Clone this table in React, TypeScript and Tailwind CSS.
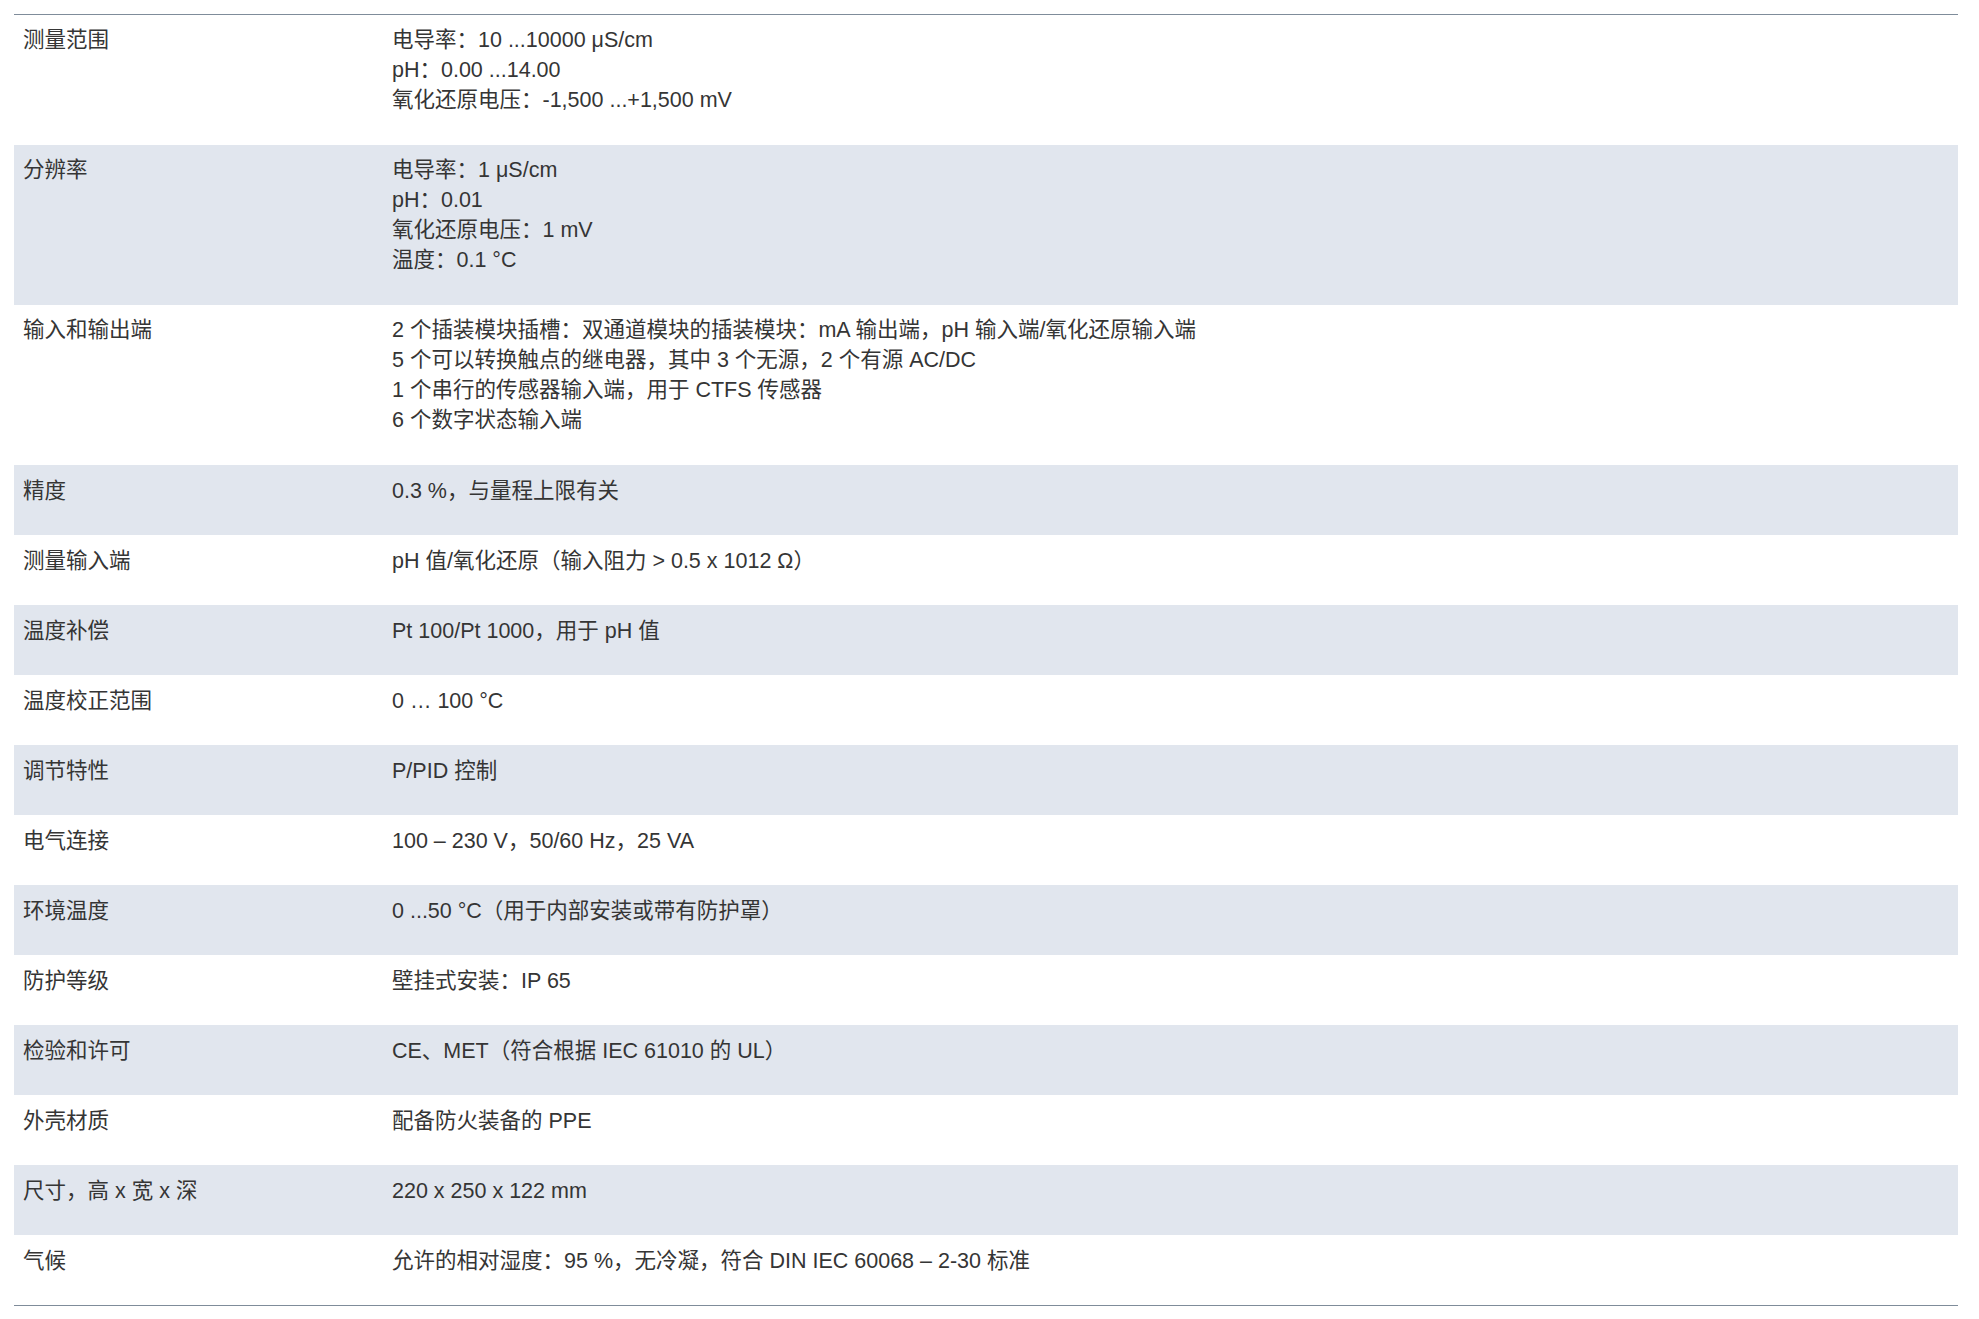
import React from "react";

const rows: { label: string; values: string[] }[] = [
  {
    label: "测量范围",
    values: ["电导率：10 ...10000 μS/cm", "pH：0.00 ...14.00", "氧化还原电压：-1,500 ...+1,500 mV"],
  },
  {
    label: "分辨率",
    values: ["电导率：1 μS/cm", "pH：0.01", "氧化还原电压：1 mV", "温度：0.1 °C"],
  },
  {
    label: "输入和输出端",
    values: [
      "2 个插装模块插槽：双通道模块的插装模块：mA 输出端，pH 输入端/氧化还原输入端",
      "5 个可以转换触点的继电器，其中 3 个无源，2 个有源 AC/DC",
      "1 个串行的传感器输入端，用于 CTFS 传感器",
      "6 个数字状态输入端",
    ],
  },
  { label: "精度", values: ["0.3 %，与量程上限有关"] },
  { label: "测量输入端", values: ["pH 值/氧化还原（输入阻力 > 0.5 x 1012 Ω）"] },
  { label: "温度补偿", values: ["Pt 100/Pt 1000，用于 pH 值"] },
  { label: "温度校正范围", values: ["0 … 100 °C"] },
  { label: "调节特性", values: ["P/PID 控制"] },
  { label: "电气连接", values: ["100 – 230 V，50/60 Hz，25 VA"] },
  { label: "环境温度", values: ["0 ...50 °C（用于内部安装或带有防护罩）"] },
  { label: "防护等级", values: ["壁挂式安装：IP 65"] },
  { label: "检验和许可", values: ["CE、MET（符合根据 IEC 61010 的 UL）"] },
  { label: "外壳材质", values: ["配备防火装备的 PPE"] },
  { label: "尺寸，高 x 宽 x 深", values: ["220 x 250 x 122 mm"] },
  { label: "气候", values: ["允许的相对湿度：95 %，无冷凝，符合 DIN IEC 60068 – 2-30 标准"] },
];

export default function App() {
  return (
    <div
      className="min-h-screen w-full bg-white pl-[14px] pr-[21px] pt-[14px] text-[#353535]"
      style={{ fontFamily: '"Liberation Sans", "Noto Sans CJK SC", sans-serif' }}
    >
      <div className="border-t border-b border-[#7f8c9a]">
        {rows.map((r, i) => {
          const multi = r.values.length > 1;
          return (
            <div
              key={i}
              className={`flex text-[21.5px] leading-[30px] ${i % 2 === 1 ? "bg-[#e1e6ee]" : "bg-white"} ${
                multi ? "pt-[10px] pb-[30px]" : "pt-[11px] pb-[29px]"
              }`}
            >
              <div className="w-[378px] shrink-0 pl-[9px]">{r.label}</div>
              <div className="flex flex-col">
                {r.values.map((v, j) => (
                  <div key={j}>{v}</div>
                ))}
              </div>
            </div>
          );
        })}
      </div>
    </div>
  );
}
